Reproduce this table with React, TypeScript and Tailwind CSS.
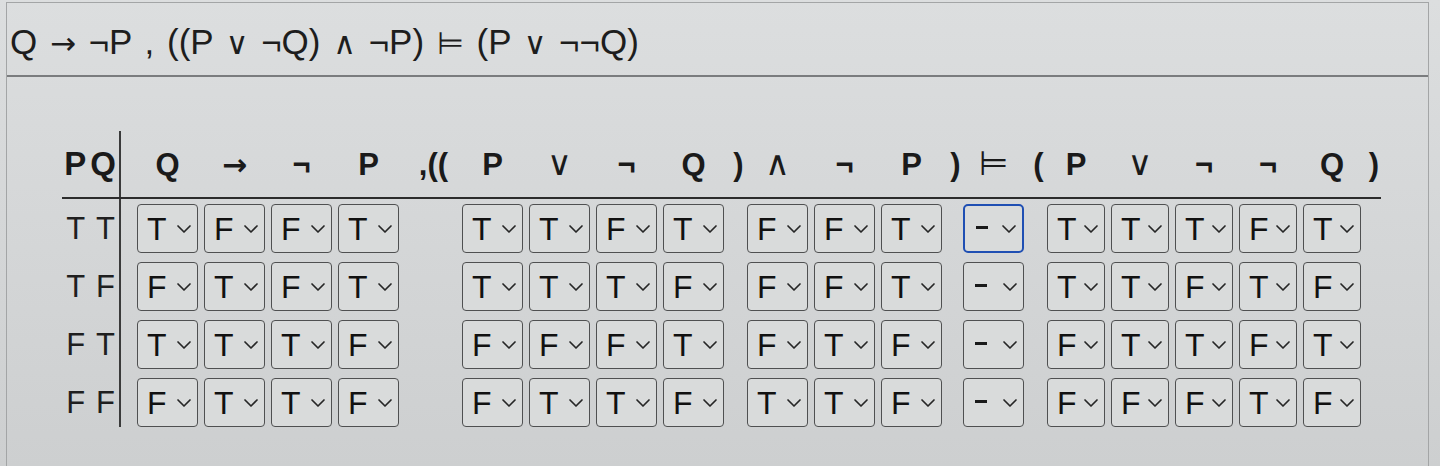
import React from "react";

const FONT = { fontFamily: '"Liberation Sans", "DejaVu Sans", Arial, sans-serif' };
const SYM = { fontFamily: '"DejaVu Sans", sans-serif' };

function Chevron() {
  return (
    <svg width="16" height="10" viewBox="0 0 16 10" className="shrink-0">
      <path d="M2 2 L8 8 L14 2" fill="none" stroke="#262626" strokeWidth="1.7" strokeLinecap="round" strokeLinejoin="round" />
    </svg>
  );
}

function Cell({ v, narrow, focus }: { v: string; narrow?: boolean; focus?: boolean }) {
  const base = narrow ? "w-[58px]" : "w-[61px]";
  const border = focus
    ? "border-2 border-[#1f4fb3] rounded-[5px]"
    : "border-[1.5px] border-[#4f5051] rounded-[4px]";
  return (
    <div className={`${base} h-[49px] ${border} bg-[#d9dbdb] flex items-center justify-between ${v === "-" ? "pl-[11px]" : "pl-[9px]"} pr-[5px]`}>
      {v === "-" ? (
        <span className="w-[12px] h-[3px] bg-[#1a1a1a] -mt-[2px]" />
      ) : (
        <span className="text-[32px] leading-none text-[#111111]">{v}</span>
      )}
      <Chevron />
    </div>
  );
}

type Row = { label: [string, string]; g1: string[]; g2: string[]; g3: string[]; g5: string[] };

const rows: Row[] = [
  { label: ["T", "T"], g1: ["T", "F", "F", "T"], g2: ["T", "T", "F", "T"], g3: ["F", "F", "T"], g5: ["T", "T", "T", "F", "T"] },
  { label: ["T", "F"], g1: ["F", "T", "F", "T"], g2: ["T", "T", "T", "F"], g3: ["F", "F", "T"], g5: ["T", "T", "F", "T", "F"] },
  { label: ["F", "T"], g1: ["T", "T", "T", "F"], g2: ["F", "F", "F", "T"], g3: ["F", "T", "F"], g5: ["F", "T", "T", "F", "T"] },
  { label: ["F", "F"], g1: ["F", "T", "T", "F"], g2: ["F", "T", "T", "F"], g3: ["T", "T", "F"], g5: ["F", "F", "F", "T", "F"] },
];

function HeadSlot({ t, narrow, kind }: { t: string; narrow?: boolean; kind?: "thin" | "arrow" }) {
  return (
    <div className={`${narrow ? "w-[64px]" : "w-[67px]"} pr-[6px] shrink-0 text-center`}>
      {kind === "thin" ? (
        <span className="font-normal text-[34px]" style={SYM}>{t}</span>
      ) : kind === "arrow" ? (
        <span className="font-bold text-[30px]" style={SYM}>{t}</span>
      ) : (
        <span>{t}</span>
      )}
    </div>
  );
}

function GapSlot({ t, w }: { t: string; w: string }) {
  return <div className={`${w} shrink-0 text-center whitespace-nowrap`}>{t}</div>;
}

function S({ c }: { c: string }) {
  return (
    <span className="font-normal text-[31px]" style={SYM}>
      {c}
    </span>
  );
}

export default function App() {
  return (
    <div className="w-[1440px] h-[466px] overflow-hidden bg-linear-to-b from-[#dcdedf] to-[#cdcfd0] pt-[2px]" style={FONT}>
      <div className="ml-[6px] w-[1423px] h-[464px] border-t border-l border-r border-[#a3a5a6]">
        <div className="h-[74px] border-b-2 border-[#7a7c7e] pl-[3px] pt-[21px]">
          <div className="text-[35px] leading-none text-[#1d1d1d] whitespace-pre [word-spacing:3px]">
            Q <S c="→" /> ¬P , ((P <S c="∨" /> ¬Q) <S c="∧" /> ¬P) <S c="⊨" /> (P <S c="∨" /> ¬¬Q)
          </div>
        </div>

        <div className="ml-[55px] mt-[56px] w-[1319px]">
          {/* header */}
          <div className="flex items-end h-[66px] border-b-2 border-[#2c2c2c] text-[31px] font-bold leading-none text-[#1a1a1a] pb-[17px]">
            <div className="w-[59px] h-[66px] -mb-[17px] border-r-2 border-[#3a3a3a] flex items-end justify-end gap-[4px] pr-[3px] pb-[17px] text-[33px]">
              <span>P</span>
              <span>Q</span>
            </div>
            <div className="w-[16px] shrink-0" />
            <HeadSlot t="Q" />
            <HeadSlot t="→" kind="arrow" />
            <HeadSlot t="¬" />
            <HeadSlot t="P" />
            <GapSlot t=",((" w="w-[57px]" />
            <HeadSlot t="P" />
            <HeadSlot t="∨" kind="thin" />
            <HeadSlot t="¬" />
            <HeadSlot t="Q" />
            <GapSlot t=")" w="w-[17px]" />
            <HeadSlot t="∧" kind="thin" />
            <HeadSlot t="¬" />
            <HeadSlot t="P" />
            <GapSlot t=")" w="w-[15px]" />
            <HeadSlot t="⊨" kind="thin" />
            <GapSlot t="(" w="w-[17px]" />
            <HeadSlot t="P" narrow />
            <HeadSlot t="∨" narrow kind="thin" />
            <HeadSlot t="¬" narrow />
            <HeadSlot t="¬" narrow />
            <HeadSlot t="Q" narrow />
            <GapSlot t=")" w="w-[14px]" />
          </div>

          {/* body */}
          {rows.map((r, i) => (
            <div key={i} className={`flex items-start ${i === 3 ? "h-[54px]" : "h-[58px]"}`}>
              <div className="w-[59px] h-full border-r-2 border-[#3a3a3a] flex items-start justify-end gap-[11px] pr-[4px] pt-[14px] text-[31px] leading-none text-[#1f1f1f]">
                <span>{r.label[0]}</span>
                <span>{r.label[1]}</span>
              </div>
              <div className="w-[16px] shrink-0" />
              <div className="flex pt-[5px]">
                <div className="flex gap-[6px]">
                  {r.g1.map((v, j) => (
                    <Cell key={j} v={v} />
                  ))}
                </div>
                <div className="w-[63px] shrink-0" />
                <div className="flex gap-[6px]">
                  {r.g2.map((v, j) => (
                    <Cell key={j} v={v} />
                  ))}
                </div>
                <div className="w-[23px] shrink-0" />
                <div className="flex gap-[6px]">
                  {r.g3.map((v, j) => (
                    <Cell key={j} v={v} />
                  ))}
                </div>
                <div className="w-[21px] shrink-0" />
                <Cell v="-" focus={i === 0} />
                <div className="w-[23px] shrink-0" />
                <div className="flex gap-[6px]">
                  {r.g5.map((v, j) => (
                    <Cell key={j} v={v} narrow />
                  ))}
                </div>
              </div>
            </div>
          ))}
        </div>
      </div>
    </div>
  );
}
